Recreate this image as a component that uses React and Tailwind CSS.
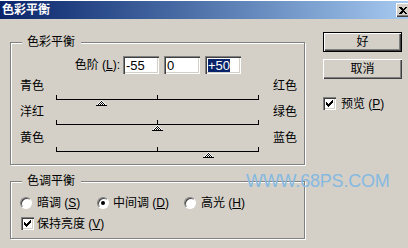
import React from "react";

const ETCH = "border border-[#808080] shadow-[1px_1px_0_#fff,inset_1px_1px_0_#fff]";
const RAISED = "shadow-[inset_1px_1px_0_#fff,inset_-1px_-1px_0_#404040,inset_-2px_-2px_0_#808080]";
const SUNKEN =
  "shadow-[inset_1px_1px_0_#808080,inset_2px_2px_0_#404040,inset_-1px_-1px_0_#fff,inset_-2px_-2px_0_#d4d0c8]";

const channels = [
  { left: "青色", right: "红色", value: -55, mt: "mt-[6px]", tmt: "mt-[3px]" },
  { left: "洋红", right: "绿色", value: 0, mt: "mt-0", tmt: "mt-[2px]" },
  { left: "黄色", right: "蓝色", value: 50, mt: "mt-[1px]", tmt: "mt-[3px]" },
];

const U = ({ children }) => <span className="underline underline-offset-1">{children}</span>;

const Group = ({ title, className, children }) => (
  <div className={`relative box-border ${ETCH} ${className}`}>
    <span className="absolute left-[11px] top-[-8px] pl-[5px] pr-[6px] bg-[#d4d0c8] leading-[14px]">{title}</span>
    {children}
  </div>
);

const Thumb = ({ id }) => (
  <svg width="11" height="6" viewBox="0 0 11 6" shapeRendering="crispEdges">
    <defs>
      <pattern id={id} width="2" height="2" patternUnits="userSpaceOnUse">
        <rect width="2" height="2" fill="#fff" />
        <rect width="1" height="1" fill="#000" />
        <rect x="1" y="1" width="1" height="1" fill="#000" />
      </pattern>
    </defs>
    <polygon points="5.5,0 11,6 0,6" fill={`url(#${id})`} />
    <rect x="0" y="5" width="11" height="1" fill="#000" />
  </svg>
);

const Track = ({ value, idx, className }) => (
  <div className={`ml-[45px] w-[203px] flex flex-col ${className}`}>
    <div className="h-[4px] flex justify-between">
      <div className="w-px bg-black" />
      <div className="w-px bg-black" />
      <div className="w-px bg-black" />
    </div>
    <div className="h-px bg-black" />
    <div className="h-[6px] relative">
      <div className="absolute top-0 flex" style={{ left: (value + 100) * 1.01 - 5 }}>
        <Thumb id={`dither${idx}`} />
      </div>
    </div>
  </div>
);

const Checkbox = () => (
  <div className={`w-[13px] h-[13px] bg-white flex items-center justify-center ${SUNKEN}`}>
    <svg width="7" height="7" viewBox="0 0 7 7" shapeRendering="crispEdges">
      <rect x="0" y="2" width="1" height="3" />
      <rect x="1" y="3" width="1" height="3" />
      <rect x="2" y="4" width="1" height="3" />
      <rect x="3" y="3" width="1" height="3" />
      <rect x="4" y="2" width="1" height="3" />
      <rect x="5" y="1" width="1" height="3" />
      <rect x="6" y="0" width="1" height="3" />
    </svg>
  </div>
);

const Radio = ({ checked }) => (
  <div className="w-[12px] h-[12px] rounded-full bg-white border border-t-[#808080] border-l-[#808080] border-r-white border-b-white shadow-[inset_1px_1px_0_#404040] flex items-center justify-center">
    {checked && <div className="w-[4px] h-[4px] rounded-full bg-black" />}
  </div>
);

const NumBox = ({ value, selected }) => (
  <div className={`w-[36px] h-[18px] bg-white pl-[3px] flex items-center text-[13px] ${SUNKEN}`}>
    <span className={selected ? "bg-[#0a246a] text-white leading-[13px]" : "leading-[13px]"}>{value}</span>
  </div>
);

export default function App() {
  return (
    <div className="relative w-[408px] h-[248px] overflow-hidden bg-[#d4d0c8] text-black text-[12px] leading-[12px] font-['Liberation_Sans','Noto_Sans_CJK_SC',sans-serif]">
      <div className="h-[19px] border-t border-t-white bg-linear-to-r from-[#0a246a] to-[#a6caf0] flex items-center justify-between">
        <span className="pl-[2px] text-white font-bold text-[12px] leading-[14px]">色彩平衡</span>
        <div className={`w-[16px] h-[14px] mr-[-4px] bg-[#d4d0c8] flex items-center pl-[3px] ${RAISED}`}>
          <svg width="8" height="7" viewBox="0 0 8 7" shapeRendering="crispEdges">
            <path d="M0 0h2l2 2 2-2h2L5 3.5 8 7H6L4 5 2 7H0l3-3.5z" fill="#000" />
          </svg>
        </div>
      </div>

      <div className="flex">
        <div className="w-[305px] pl-[10px] mt-[23px] flex flex-col">
          <Group title="色彩平衡" className="h-[123px] flex flex-col pt-[13px]">
            <div className="flex items-center h-[18px]">
              <div className="w-[109px] text-right">
                色阶 (<U>L</U>):
              </div>
              <div className="ml-[3px] flex gap-[5px]">
                <NumBox value="-55" />
                <NumBox value="0" />
                <NumBox value="+50" selected />
              </div>
            </div>
            {channels.map((c, i) => (
              <React.Fragment key={c.left}>
                <div className={`h-[12px] flex justify-between pl-[9px] pr-[7px] ${c.mt}`}>
                  <span>{c.left}</span>
                  <span>{c.right}</span>
                </div>
                <Track value={c.value} idx={i} className={c.tmt} />
              </React.Fragment>
            ))}
          </Group>

          <Group title="色调平衡" className="h-[58px] mt-[16px] pt-[15px] pl-[9px] flex flex-col">
            <div className="flex h-[12px] items-center">
              <div className="w-[77px] flex items-center gap-[5px]">
                <Radio />
                <span>
                  暗调 (<U>S</U>)
                </span>
              </div>
              <div className="w-[87px] flex items-center gap-[4px]">
                <Radio checked />
                <span>
                  中间调 (<U>D</U>)
                </span>
              </div>
              <div className="flex items-center gap-[5px]">
                <Radio />
                <span>
                  高光 (<U>H</U>)
                </span>
              </div>
            </div>
            <div className="mt-[8px] ml-[1px] flex items-center gap-[3px]">
              <Checkbox />
              <span>
                保持亮度 (<U>V</U>)
              </span>
            </div>
          </Group>
        </div>

        <div className="ml-[18px] w-[79px] mt-[13px] flex flex-col">
          <button className={`h-[20px] border border-black bg-[#d4d0c8] ${RAISED}`}>好</button>
          <button className={`h-[20px] mt-[7px] bg-[#d4d0c8] ${RAISED}`}>取消</button>
          <div className="mt-[18px] flex items-center gap-[5px]">
            <Checkbox />
            <span>
              预览 (<U>P</U>)
            </span>
          </div>
        </div>
      </div>

      <div className="absolute left-[246px] top-[172px] text-[18px] leading-[18px] text-[#86b9e0] tracking-[-0.2px]">
        WWW.68PS.COM
      </div>
    </div>
  );
}
